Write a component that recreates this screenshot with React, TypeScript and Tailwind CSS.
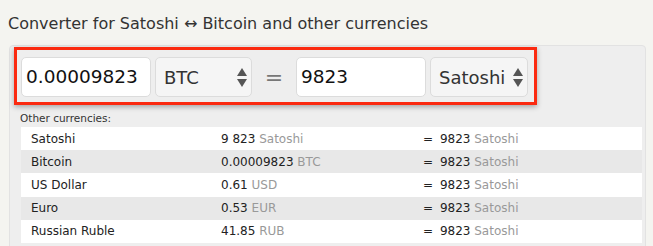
import React from 'react';

const rows = [
  { name: 'Satoshi', value: '9 823', unit: 'Satoshi' },
  { name: 'Bitcoin', value: '0.00009823', unit: 'BTC' },
  { name: 'US Dollar', value: '0.61', unit: 'USD' },
  { name: 'Euro', value: '0.53', unit: 'EUR' },
  { name: 'Russian Ruble', value: '41.85', unit: 'RUB' },
];

function Arrows() {
  return (
    <svg width="10" height="19" viewBox="0 0 10 19" className="shrink-0">
      <path d="M5 0 L10 8 L0 8 Z" fill="#555" />
      <path d="M0 11 L10 11 L5 19 Z" fill="#555" />
    </svg>
  );
}

function Select({ label, width }: { label: string; width: string }) {
  return (
    <div
      className={`${width} h-[40px] flex items-center justify-between pl-[8px] pr-[4px] bg-[#f5f5f5] border border-[#dcdcdc] rounded-[5px] text-[18px] text-[#333]`}
    >
      <span>{label}</span>
      <Arrows />
    </div>
  );
}

export default function App() {
  return (
    <div className="w-[653px] h-[246px] overflow-hidden bg-[#f4f4f0] font-['DejaVu_Sans',sans-serif]">
      <h1 className="pl-[8px] pt-[13px] h-[45px] text-[16px] leading-[22px] text-[#333]">
        Converter for Satoshi ↔ Bitcoin and other currencies
      </h1>

      <div className="ml-[9px] w-[637px] h-[210px] bg-[#eeeeee] border border-[#e2e2e2] rounded-[4px] pt-[1px] pl-[4px]">
        {/* converter row */}
        <div className="w-[523px] h-[58px] flex items-start border-[3px] border-[#fb2a10] pl-[4px] pt-[7px] shadow-[0_2px_5px_rgba(0,0,0,0.3)]">
          <div className="w-[130px] h-[40px] flex items-center pl-[4px] bg-white border border-[#dcdcdc] rounded-[5px] text-[18.5px] text-[#111]">
            0.00009823
          </div>
          <div className="ml-[4px]">
            <Select label="BTC" width="w-[97px]" />
          </div>
          <div className="w-[44px] h-[40px] flex items-center justify-center text-[22px] text-[#777]">=</div>
          <div className="w-[130px] h-[40px] flex items-center pl-[4px] bg-white border border-[#dcdcdc] rounded-[5px] text-[18.5px] text-[#111]">
            9823
          </div>
          <div className="ml-[4px]">
            <Select label="Satoshi" width="w-[98px]" />
          </div>
        </div>

        {/* other currencies */}
        <div className="pl-[6px] pt-[6px] text-[10.5px] leading-[14px] text-[#333]">Other currencies:</div>
        <div className="ml-[7px] mt-[2px] w-[621px]">
          {rows.map((r, i) => (
            <div
              key={r.name}
              className={`h-[23.2px] flex items-center text-[12px] text-[#222] ${i % 2 === 0 ? 'bg-white' : 'bg-[#e8e8e8]'}`}
            >
              <div className="w-[200px] pl-[10px]">{r.name}</div>
              <div className="w-[202px]">
                {r.value} <span className="text-[#999]">{r.unit}</span>
              </div>
              <div>
                = <span className="ml-[3px]">9823</span> <span className="text-[#999]">Satoshi</span>
              </div>
            </div>
          ))}
        </div>
      </div>
    </div>
  );
}
